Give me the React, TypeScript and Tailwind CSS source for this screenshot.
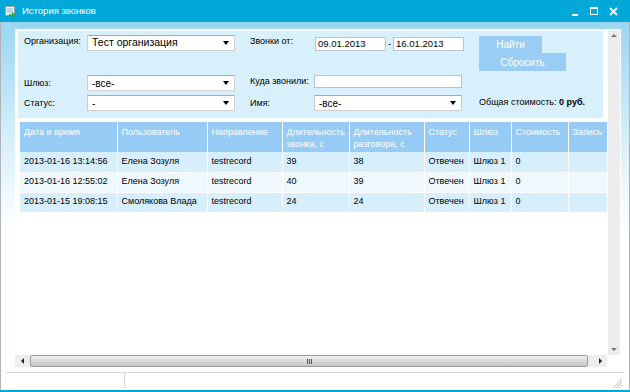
import React from "react";

const rows = [
  ["2013-01-16 13:14:56", "Елена Зозуля", "testrecord", "39", "38", "Отвечен", "Шлюз 1", "0", ""],
  ["2013-01-16 12:55:02", "Елена Зозуля", "testrecord", "40", "39", "Отвечен", "Шлюз 1", "0", ""],
  ["2013-01-15 19:08:15", "Смолякова Влада", "testrecord", "24", "24", "Отвечен", "Шлюз 1", "0", ""],
];

const cols = [
  { w: 97, title: ["Дата и время"] },
  { w: 90, title: ["Пользователь"] },
  { w: 75, title: ["Направление"] },
  { w: 67, title: ["Длительность", "звонка, с"] },
  { w: 75, title: ["Длительность", "разговора, с"] },
  { w: 45, title: ["Статус"] },
  { w: 42, title: ["Шлюз"] },
  { w: 57, title: ["Стоимость"] },
  { w: 39, title: ["Запись"] },
];

function Caret() {
  return (
    <span className="w-0 h-0 border-l-[3.5px] border-r-[3.5px] border-t-[4px] border-l-transparent border-r-transparent border-t-black" />
  );
}

function Select({ value, big }: { value: string; big?: boolean }) {
  return (
    <div className="w-[148px] h-[16px] bg-white border border-[#cfcfcf] border-t-[#ababab] flex items-center justify-between pl-[4px] pr-[5px]">
      <span className={big ? "text-[10.5px] text-black" : "text-[10px] text-black"}>{value}</span>
      <Caret />
    </div>
  );
}

function Label({ text, w }: { text: string; w: number }) {
  return (
    <span className="text-[9px] leading-[12px] text-black shrink-0" style={{ width: w }}>
      {text}
    </span>
  );
}

function TextInput({ value, w, h }: { value?: string; w: number; h: number }) {
  return (
    <div
      className="bg-white border border-[#b8c3cc] flex items-center pl-[2px] text-[9.5px] text-black"
      style={{ width: w, height: h }}
    >
      {value}
    </div>
  );
}

export default function App() {
  return (
    <div className="w-[630px] h-[392px] flex flex-col font-['Liberation_Sans',Arial,sans-serif] overflow-hidden bg-white">
      {/* title bar */}
      <div className="h-[22px] bg-[#02a8d8] flex items-center pl-[5px] pr-[12px] shrink-0">
        <svg width="11" height="11" viewBox="0 0 11 11">
          <rect x="0.5" y="0.5" width="9" height="9" fill="#f4f4f4" stroke="#9aa3a8" />
          <rect x="2" y="2" width="6" height="5" fill="#b7d4e6" />
          <path d="M4 8.5h3.5V6.5L10.5 9 7.5 11.5V9.5H4z" fill="#3cb43c" stroke="#1e8a24" strokeWidth="0.5" />
        </svg>
        <span className="ml-[6px] text-[9.5px] text-white">История звонков</span>
        <div className="ml-auto flex items-center gap-[9px]">
          <span className="w-[6px] h-[2px] bg-white mt-[7px]" />
          <span className="ml-[3px] w-[8px] h-[8px] border border-white border-t-[2px]" />
          <svg width="9" height="9" viewBox="0 0 9 9" className="ml-[2px]">
            <path d="M1 1l7 7M8 1L1 8" stroke="white" strokeWidth="1.8" />
          </svg>
        </div>
      </div>

      {/* body */}
      <div className="flex-1 flex flex-col border-l border-r border-[#aeb4b8] min-h-0">
        <div className="h-[350px] shrink-0 bg-linear-to-b from-[#9ad6f2] via-[#d8f0fb] via-[35%] to-white to-[60%] pt-[7px] pl-[14px] pr-[8px]">
          <div className="h-[341px] bg-white flex flex-col">
            <div className="flex h-[326px]">
              {/* content */}
              <div className="w-[593px] flex flex-col overflow-hidden">
                {/* filter panel */}
                <div className="ml-[3px] mt-[2px] w-[585px] bg-[#d8effc] pt-[4px] pb-[7px] pl-[6px] flex">
                  <div className="w-[211px] flex flex-col">
                    <div className="flex items-start h-[16px]">
                      <Label text="Организация:" w={63} />
                      <Select value="Тест организация" big />
                    </div>
                    <div className="flex items-center h-[16px] mt-[24px]">
                      <Label text="Шлюз:" w={63} />
                      <Select value="-все-" />
                    </div>
                    <div className="flex items-center h-[16px] mt-[4px]">
                      <Label text="Статус:" w={63} />
                      <Select value="-" />
                    </div>
                  </div>

                  <div className="ml-[15px] w-[214px] flex flex-col">
                    <div className="flex items-start h-[16px]">
                      <Label text="Звонки от:" w={65} />
                      <div className="mt-[2px] flex items-center">
                        <TextInput value="09.01.2013" w={71} h={14} />
                        <span className="w-[7px] text-center text-[9.5px]">-</span>
                        <TextInput value="16.01.2013" w={71} h={14} />
                      </div>
                    </div>
                    <div className="flex items-start h-[16px] mt-[24px]">
                      <Label text="Куда звонили:" w={64} />
                      <TextInput w={148} h={13} />
                    </div>
                    <div className="flex items-center h-[16px] mt-[4px]">
                      <Label text="Имя:" w={64} />
                      <Select value="-все-" />
                    </div>
                  </div>

                  <div className="ml-[15px] flex flex-col">
                    <div className="mt-[1px] w-[63px] h-[17px] bg-[#99cdf5] text-white text-[10px] flex items-center justify-center">
                      Найти
                    </div>
                    <div className="w-[87px] h-[18px] bg-[#99cdf5] text-white text-[10px] flex items-center justify-center">
                      Сбросить
                    </div>
                    <div className="mt-[24px] h-[16px] flex items-center text-[9px] text-black whitespace-nowrap">
                      Общая стоимость:&nbsp;<b>0 руб.</b>
                    </div>
                  </div>
                </div>

                {/* table */}
                <table className="ml-[5px] mt-[4px] w-[587px] border-collapse table-fixed text-[9px]">
                  <colgroup>
                    {cols.map((c, i) => (
                      <col key={i} style={{ width: c.w }} />
                    ))}
                  </colgroup>
                  <thead>
                    <tr className="h-[30px] bg-[#95cbf5]">
                      {cols.map((c, i) => (
                        <th
                          key={i}
                          className="align-top text-left font-normal text-white pl-[4px] pt-[4px] leading-[12px] border-r border-white whitespace-nowrap overflow-hidden"
                        >
                          {c.title.map((t, j) => (
                            <div key={j}>{t}</div>
                          ))}
                        </th>
                      ))}
                    </tr>
                  </thead>
                  <tbody>
                    {rows.map((r, i) => (
                      <tr key={i} className={i % 2 === 1 ? "h-[20px] bg-[#eef8fe]" : "h-[20px] bg-[#d7eefc]"}>
                        {r.map((v, j) => (
                          <td
                            key={j}
                            className="pl-[4px] text-black border-r border-b border-white whitespace-nowrap overflow-hidden"
                          >
                            {v}
                          </td>
                        ))}
                      </tr>
                    ))}
                  </tbody>
                </table>
              </div>

              {/* vertical scrollbar */}
              <div className="w-[12px] mt-[1px] bg-[#ededed] flex flex-col items-center justify-between py-[4px]">
                <span className="w-0 h-0 border-l-[3px] border-r-[3px] border-b-[3px] border-l-transparent border-r-transparent border-b-[#7a7a7a]" />
                <span className="w-0 h-0 border-l-[3px] border-r-[3px] border-t-[3px] border-l-transparent border-r-transparent border-t-[#7a7a7a]" />
              </div>
            </div>

            {/* horizontal scrollbar */}
            <div className="w-[592px] h-[12px] bg-[#ededed] flex items-center">
              <div className="w-[15px] flex justify-center">
                <span className="w-0 h-0 border-t-[3px] border-b-[3px] border-r-[3px] border-t-transparent border-b-transparent border-r-[#222]" />
              </div>
              <div className="flex-1 h-[12px] rounded-[2px] border border-[#9c9c9c] bg-linear-to-b from-[#f0f0f0] to-[#c6c6c6] flex items-center justify-center gap-[1px]">
                <span className="w-[1px] h-[5px] bg-[#555]" />
                <span className="w-[1px] h-[5px] bg-[#555]" />
                <span className="w-[1px] h-[5px] bg-[#555]" />
              </div>
              <div className="w-[19px] flex justify-center pl-[6px]">
                <span className="w-0 h-0 border-t-[3px] border-b-[3px] border-l-[3px] border-t-transparent border-b-transparent border-l-[#222]" />
              </div>
            </div>
          </div>
        </div>

        {/* status bar */}
        <div className="mx-[5px] border-t border-[#dadada]" />
        <div className="flex-1 flex items-stretch relative">
          <div className="w-[124px] border-r border-[#d6d6d6] mb-[2px]" />
          <svg width="11" height="11" viewBox="0 0 11 11" className="absolute right-[6px] bottom-[1px]">
            <path d="M10 1L1 10M10 4L4 10M10 7L7 10" stroke="#b9b9b9" strokeWidth="1" />
          </svg>
        </div>
      </div>
      <div className="h-[2px] bg-[#02a8d8] shrink-0" />
    </div>
  );
}
